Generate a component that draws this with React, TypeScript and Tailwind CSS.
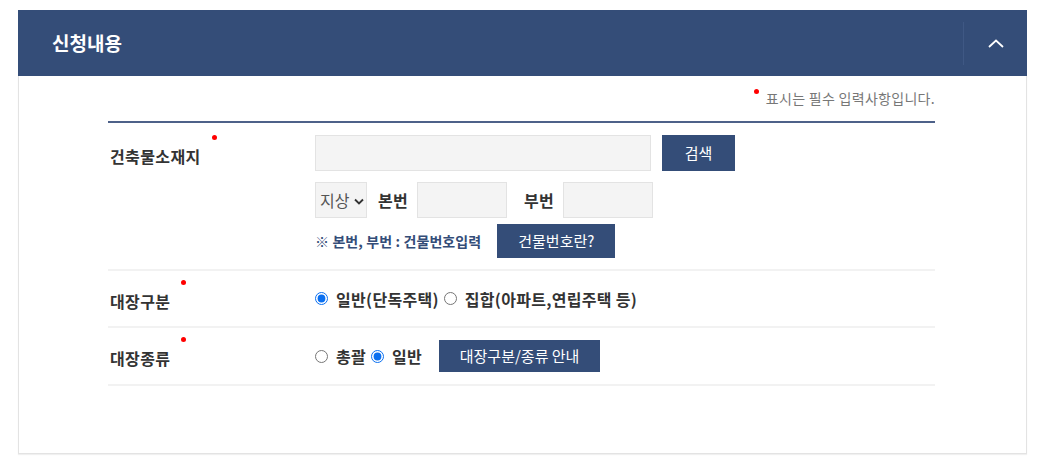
import React, { useState } from 'react';

const FONT = { fontFamily: '"Noto Sans CJK KR", "Noto Sans", sans-serif' };

const RequiredLabel: React.FC<{ text: string }> = ({ text }) => (
  <span className="relative inline-block text-[16px] font-bold tracking-[0.4px] text-[#333]">
    {text}
    <span className="absolute -right-[16px] -top-[9px] h-[5px] w-[5px] rounded-full bg-[#ff0000]" />
  </span>
);

const NavyButton: React.FC<{ children: React.ReactNode; className?: string }> = ({ children, className = '' }) => (
  <button
    type="button"
    className={`flex items-center justify-center bg-[#344d78] text-[15px] text-white ${className}`}
  >
    {children}
  </button>
);

const Radio: React.FC<{ name: string; label: string; checked: boolean; onChange: () => void }> = ({
  name,
  label,
  checked,
  onChange,
}) => (
  <label className="flex items-center gap-[8px] text-[16px] font-bold tracking-[0.3px] text-[#333]">
    <input
      type="radio"
      name={name}
      checked={checked}
      onChange={onChange}
      className="m-0 h-[13px] w-[13px] accent-[#0a6ff0]"
    />
    {label}
  </label>
);

const App: React.FC = () => {
  const [ledgerType, setLedgerType] = useState('general');
  const [ledgerKind, setLedgerKind] = useState('general');

  return (
    <div className="min-h-screen bg-white pt-[10px]" style={FONT}>
      <section className="ml-[18px] w-[1009px]">
        {/* Header */}
        <div className="flex h-[66px] items-center bg-[#344d78]">
          <h2 className="flex-1 pl-[34px] text-[19px] font-bold text-white">신청내용</h2>
          <div className="h-[43px] w-px bg-[#3f5884]" />
          <button type="button" className="flex h-full w-[63px] items-center justify-center">
            <svg width="16" height="9" viewBox="0 0 16 9" fill="none">
              <path d="M1 8L8 1.5L15 8" stroke="white" strokeWidth="1.8" />
            </svg>
          </button>
        </div>

        {/* Body */}
        <div className="border border-t-0 border-[#e3e3e3] pb-[67px] shadow-[0_1px_1px_rgba(0,0,0,0.06)]">
          <div className="ml-[89px] w-[827px]">
            <p className="flex justify-end pt-[12px] text-[14px] leading-[20px] tracking-[0.3px] text-[#777]">
              <span className="relative">
                <span className="absolute -left-[12px] top-[1px] h-[5px] w-[5px] rounded-full bg-[#ff0000]" />
                표시는 필수 입력사항입니다.
              </span>
            </p>
            <div className="mt-[13px] h-[2px] bg-[#4d6189]" />

            {/* 건축물소재지 */}
            <div className="flex border-b-2 border-[#f2f2f2] pb-[11px] pt-[12px]">
              <div className="w-[207px] pl-[2px] pt-[9px]">
                <RequiredLabel text="건축물소재지" />
              </div>
              <div className="flex flex-col">
                <div className="flex items-center gap-[11px]">
                  <input className="h-[36px] w-[336px] border border-[#e3e3e3] bg-[#f4f4f4]" />
                  <NavyButton className="h-[36px] w-[73px]">검색</NavyButton>
                </div>
                <div className="mt-[11px] flex items-center">
                  <div className="relative h-[36px] w-[52px] border border-[#e3e3e3] bg-[#f4f4f4]">
                    <select className="h-full w-full appearance-none bg-transparent pl-[4px] text-[16px] text-[#555] outline-none">
                      <option>지상</option>
                      <option>지하</option>
                    </select>
                    <svg
                      className="pointer-events-none absolute right-[2px] top-[15px]"
                      width="10"
                      height="7"
                      viewBox="0 0 10 7"
                      fill="none"
                    >
                      <path d="M1 1.5L5 5.5L9 1.5" stroke="#333" strokeWidth="1.8" />
                    </svg>
                  </div>
                  <span className="ml-[11px] text-[16px] font-bold tracking-[0.3px] text-[#333]">본번</span>
                  <input className="ml-[9px] h-[36px] w-[90px] border border-[#e3e3e3] bg-[#f4f4f4]" />
                  <span className="ml-[17px] text-[16px] font-bold tracking-[0.3px] text-[#333]">부번</span>
                  <input className="ml-[9px] h-[36px] w-[90px] border border-[#e3e3e3] bg-[#f4f4f4]" />
                </div>
                <div className="mt-[6px] flex items-center">
                  <span className="text-[14px] font-bold tracking-[0.1px] text-[#344d78]">※ 본번, 부번 : 건물번호입력</span>
                  <NavyButton className="ml-[16px] h-[34px] w-[118px]">건물번호란?</NavyButton>
                </div>
              </div>
            </div>

            {/* 대장구분 */}
            <div className="flex h-[57px] items-center border-b-2 border-[#f2f2f2]">
              <div className="w-[207px] pl-[2px] pt-[4px]">
                <RequiredLabel text="대장구분" />
              </div>
              <div className="flex items-center gap-[5px]">
                <Radio
                  name="ledgerType"
                  label="일반(단독주택)"
                  checked={ledgerType === 'general'}
                  onChange={() => setLedgerType('general')}
                />
                <Radio
                  name="ledgerType"
                  label="집합(아파트,연립주택 등)"
                  checked={ledgerType === 'collective'}
                  onChange={() => setLedgerType('collective')}
                />
              </div>
            </div>

            {/* 대장종류 */}
            <div className="flex h-[58px] items-center border-b-2 border-[#f2f2f2]">
              <div className="w-[207px] pl-[2px] pt-[4px]">
                <RequiredLabel text="대장종류" />
              </div>
              <div className="flex items-center gap-[5px]">
                <Radio
                  name="ledgerKind"
                  label="총괄"
                  checked={ledgerKind === 'summary'}
                  onChange={() => setLedgerKind('summary')}
                />
                <Radio
                  name="ledgerKind"
                  label="일반"
                  checked={ledgerKind === 'general'}
                  onChange={() => setLedgerKind('general')}
                />
                <NavyButton className="ml-[12px] h-[32px] w-[161px]">대장구분/종류 안내</NavyButton>
              </div>
            </div>
          </div>
        </div>
      </section>
    </div>
  );
};

export default App;
